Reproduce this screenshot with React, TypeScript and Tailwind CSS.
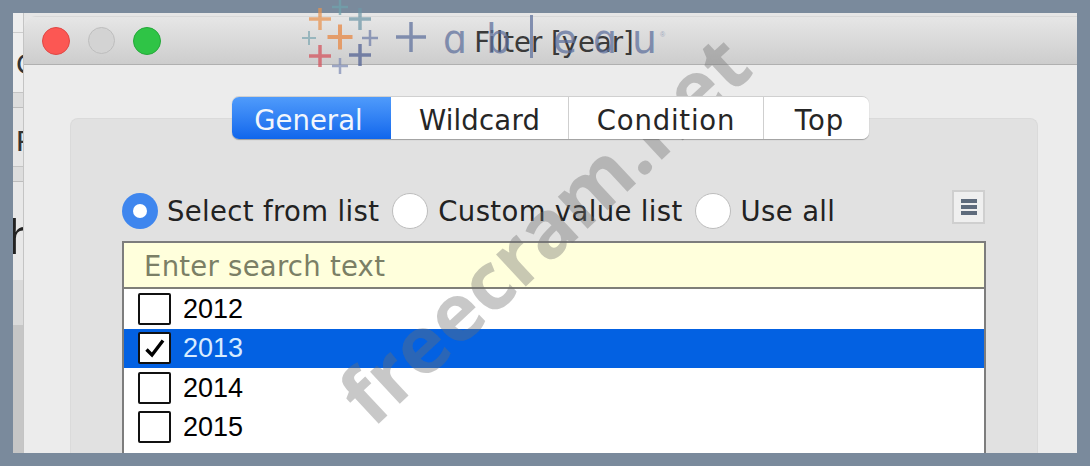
const ui = { fontFamily: '"DejaVu Sans", sans-serif' };
const helv = { fontFamily: '"Liberation Sans", Arial, sans-serif' };

function Cross({ x, y, a, w, c }: { x: number; y: number; a: number; w: number; c: string }) {
  return (
    <g stroke={c} strokeWidth={w}>
      <line x1={x - a} y1={y} x2={x + a} y2={y} />
      <line x1={x} y1={y - a} x2={x} y2={y + a} />
    </g>
  );
}

function Letter({ x, ch, w }: { x: number; ch: string; w: number }) {
  return (
    <text
      x={x}
      y={53}
      textLength={w}
      lengthAdjust="spacingAndGlyphs"
      fontFamily='"DejaVu Sans", sans-serif'
      fontSize={40}
      fill="#5d6f9c"
    >
      {ch}
    </text>
  );
}

function TableauLogo() {
  return (
    <svg className="absolute left-0 top-0 pointer-events-none" width="1090" height="100" viewBox="0 0 1090 100">
      <g opacity="0.72">
        <Cross x={340} y={37} a={12.5} w={4} c="#e8853f" />
        <Cross x={320} y={19} a={11} w={3.5} c="#e8934f" />
        <Cross x={340} y={7} a={8} w={2.5} c="#6fa3ad" />
        <Cross x={360} y={19} a={11} w={3.5} c="#6f98a8" />
        <Cross x={309} y={38} a={7} w={2} c="#7fa8b2" />
        <Cross x={370} y={38} a={8} w={2.5} c="#6f7da8" />
        <Cross x={320} y={56} a={11} w={3.5} c="#d4505a" />
        <Cross x={340} y={66} a={8} w={2.5} c="#7f8cb5" />
        <Cross x={360} y={55} a={11} w={3.5} c="#4f5f92" />
        <Cross x={411} y={37} a={15} w={3.5} c="#5d6f9c" />
        <Letter x={443} ch="ɑ" w={24} />
        <Letter x={486} ch="b" w={25} />
        <rect x="530" y="15" width="3" height="43" fill="#5d6f9c" />
        <Letter x={553} ch="e" w={24} />
        <Letter x={593} ch="ɑ" w={24} />
        <Letter x={632} ch="u" w={25} />
        <text x="660" y="37" fontSize="7" fill="#8a96b5" fontFamily='"Liberation Sans", sans-serif'>®</text>
      </g>
    </svg>
  );
}

function Traffic() {
  return (
    <div className="flex items-center gap-[18px] ml-[18px]">
      <div className="w-[28px] h-[28px] rounded-full bg-[#fc5753] border border-[#df4744]" />
      <div className="w-[27px] h-[27px] rounded-full bg-[#d3d3d3] border border-[#bdbdbd]" />
      <div className="w-[28px] h-[28px] rounded-full bg-[#2fc446] border border-[#25a83a]" />
    </div>
  );
}

function Radio({ on }: { on?: boolean }) {
  return on ? (
    <div className="w-[36px] h-[36px] rounded-full bg-[#3f86ee] flex items-center justify-center shrink-0">
      <div className="w-[14px] h-[14px] rounded-full bg-white" />
    </div>
  ) : (
    <div className="w-[36px] h-[36px] rounded-full bg-white border border-[#bdbdbd] shrink-0" />
  );
}

function Row({ year, selected }: { year: string; selected?: boolean }) {
  return (
    <div className={`h-[39.5px] flex items-center pl-[14px] gap-[12px] ${selected ? 'bg-[#0361e2] text-[#d8ecff]' : 'bg-white text-black'}`}>
      <div className="w-[33px] h-[32px] rounded-[2px] bg-white border-2 border-[#111] flex items-center justify-center">
        {selected && (
          <svg width="22" height="20" viewBox="0 0 22 20">
            <path d="M2.5 11.5 L8 17 L19 2.5" fill="none" stroke="#000" strokeWidth="3.4" />
          </svg>
        )}
      </div>
      <span className="text-[27px] leading-none pt-[1px]" style={helv}>{year}</span>
    </div>
  );
}

export default function App() {
  return (
    <div className="relative w-[1090px] h-[466px] overflow-hidden bg-[#7a8a9c] p-[13px]" style={ui}>
      <div className="flex h-full bg-[#e6e6e6]">
        <div className="w-[11px] shrink-0 overflow-hidden bg-[#eeeeee] flex flex-col text-[#333] text-[30px] leading-none border-r border-[#c4c4c4]" style={helv}>
          <div className="h-[20px] border-b border-[#cccccc]" />
          <div className="h-[60px] border-b border-[#c4c4c4] pt-[16px] pl-[3px]">C</div>
          <div className="h-[15px] bg-[#dddddd] border-b border-[#bdbdbd]" />
          <div className="h-[59px] pt-[18px] pl-[3px] border-b border-[#c4c4c4] bg-[#e6e6e6]">F</div>
          <div className="h-[15px] bg-[#dddddd] border-b border-[#bdbdbd]" />
          <div className="h-[98px] pt-[30px] -ml-[5px] bg-[#e8e8e8] text-[50px] text-[#222]">h</div>
          <div className="h-[45px] bg-[#dadada]" />
          <div className="flex-1 bg-[#c6c6c6]" />
        </div>
        <div className="flex-1 flex flex-col mt-[3px] rounded-tl-[12px] overflow-hidden bg-[#ececec]">
          <div className="relative h-[49px] shrink-0 flex items-center bg-gradient-to-b from-[#e6e6e6] to-[#cdcdcd] border-b border-[#b0b0b0] border-t border-t-[#d8d8d8]">
            <Traffic />
            <div className="absolute inset-x-0 top-0 h-full flex items-center justify-center pl-[7px] pt-[5px] text-[27.5px] text-[#3a3a3a]">
              Filter [year]
            </div>
          </div>
          <div className="flex-1 flex flex-col pl-[46px] pr-[39px] pt-[31px] overflow-hidden">
            <div className="relative z-10 flex justify-center h-[43px] mr-[7px]">
              <div className="flex rounded-[7px] shadow-[0_1px_1px_rgba(0,0,0,0.3)] border-t border-[#d0d0d0] text-[27.5px]">
                <div className="w-[159px] flex items-center justify-center pr-[6px] pt-[5px] rounded-l-[7px] bg-gradient-to-b from-[#4f9bfb] to-[#0f66ec] text-[#f2f6fc]">General</div>
                <div className="w-[178px] flex items-center justify-center pt-[5px] bg-white text-[#262626] border-r border-[#cfcfcf] tracking-[0.2px]">Wildcard</div>
                <div className="w-[195px] flex items-center justify-center pt-[5px] bg-white text-[#262626] border-r border-[#cfcfcf] tracking-[0.8px]">Condition</div>
                <div className="w-[105px] flex items-center justify-center pl-[6px] pt-[5px] rounded-r-[7px] bg-white text-[#262626] tracking-[1px]">Top</div>
              </div>
            </div>
            <div className="-mt-[21px] flex-1 bg-[#e1e1e1] rounded-t-[8px] border-t border-x border-[#dadada] px-[51px] pt-[74px] min-h-0">
              <div className="flex items-center h-[36px] text-[27.5px] text-[#222] tracking-[0.35px]">
                <Radio on />
                <span className="ml-[9px] mr-[13px] pt-[2px]">Select from list</span>
                <Radio />
                <span className="ml-[10px] mr-[12px] pt-[2px]">Custom value list</span>
                <Radio />
                <span className="ml-[10px] pt-[2px]">Use all</span>
                <div className="ml-auto mr-[1px] w-[33px] h-[34px] -mt-[8px] bg-[#efefef] border-2 border-[#cfcfcf] flex flex-col items-center justify-center gap-[2px]">
                  <div className="w-[16px] h-[4px] bg-[#5e6b7c]" />
                  <div className="w-[16px] h-[4px] bg-[#5e6b7c]" />
                  <div className="w-[16px] h-[4px] bg-[#5e6b7c]" />
                </div>
              </div>
              <div className="mt-[12px] border-x-2 border-t-2 border-[#7d7d7d] bg-white">
                <div className="h-[46px] bg-[#ffffdc] border-b-2 border-[#7f7f78] flex items-center pl-[20px] pt-[3px] text-[27.5px] tracking-[0.25px] text-[#7b7f66]">
                  Enter search text
                </div>
                <Row year="2012" />
                <Row year="2013" selected />
                <Row year="2014" />
                <Row year="2015" />
                <div className="h-[20px] bg-white" />
              </div>
            </div>
          </div>
        </div>
      </div>
      <TableauLogo />
      <div
        className="absolute left-[543px] top-[228px] -translate-x-1/2 -translate-y-1/2 rotate-[-43deg] whitespace-nowrap text-[80px] leading-none font-bold text-[rgba(110,110,110,0.38)] pointer-events-none"
        style={{ fontFamily: '"Open Sans", sans-serif' }}
      >
        freecram.net
      </div>
    </div>
  );
}
